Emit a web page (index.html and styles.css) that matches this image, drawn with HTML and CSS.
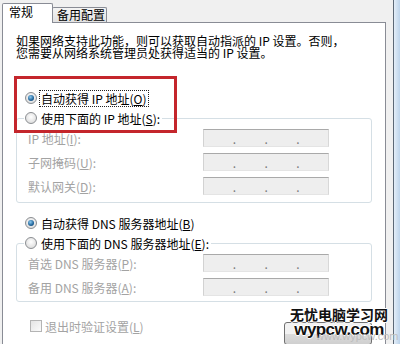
FILE: index.html
```html
<!DOCTYPE html>
<html lang="zh-CN">
<head>
    <meta charset="UTF-8">
    <title>Internet 协议版本 4 (TCP/IPv4) 属性</title>
    <link rel="stylesheet" href="styles.css">
</head>
<body>
    <div class="window">
        <div class="dialog">
            <div class="tabs">
                <div class="tab tab-active">常规</div>
                <div class="tab">备用配置</div>
            </div>
            <div class="panel">
                <p class="intro">如果网络支持此功能，则可以获取自动指派的 IP 设置。否则，<br>您需要从网络系统管理员处获得适当的 IP 设置。</p>

                <div class="option option-first">
                    <span class="radio checked"></span>
                    <span class="focus">自动获得 IP 地址(<u>O</u>)</span>
                </div>
                <fieldset class="group group-ip">
                    <legend class="legend"><span class="radio"></span>使用下面的 IP 地址(<u>S</u>):</legend>
                    <div class="fields">
                        <div class="field">
                            <span class="field-label">IP 地址(<u>I</u>):</span>
                            <span class="ip-box"><span></span><b>.</b><span></span><b>.</b><span></span><b>.</b><span></span></span>
                        </div>
                        <div class="field">
                            <span class="field-label">子网掩码(<u>U</u>):</span>
                            <span class="ip-box"><span></span><b>.</b><span></span><b>.</b><span></span><b>.</b><span></span></span>
                        </div>
                        <div class="field">
                            <span class="field-label">默认网关(<u>D</u>):</span>
                            <span class="ip-box"><span></span><b>.</b><span></span><b>.</b><span></span><b>.</b><span></span></span>
                        </div>
                    </div>
                </fieldset>

                <div class="option option-dns">
                    <span class="radio checked"></span>
                    <span>自动获得 DNS 服务器地址(<u>B</u>)</span>
                </div>
                <fieldset class="group group-dns">
                    <legend class="legend"><span class="radio"></span>使用下面的 DNS 服务器地址(<u>E</u>):</legend>
                    <div class="fields">
                        <div class="field">
                            <span class="field-label">首选 DNS 服务器(<u>P</u>):</span>
                            <span class="ip-box"><span></span><b>.</b><span></span><b>.</b><span></span><b>.</b><span></span></span>
                        </div>
                        <div class="field">
                            <span class="field-label">备用 DNS 服务器(<u>A</u>):</span>
                            <span class="ip-box"><span></span><b>.</b><span></span><b>.</b><span></span><b>.</b><span></span></span>
                        </div>
                    </div>
                </fieldset>

                <div class="check-row">
                    <div class="check"><span class="checkbox"></span>退出时验证设置(<u>L</u>)</div>
                    <div class="button"></div>
                </div>

                <!-- red annotation frame -->
                <div class="highlight"></div>
            </div>
        </div>
        <div class="frame-edge"></div>
    </div>

    <div class="watermark">
        <div class="wm-faint">www.wypcw.com</div>
        <div class="wm-cn">无忧电脑学习网</div>
        <div class="wm-en">wypcw.com</div>
    </div>
</body>
</html>
```

FILE: styles.css
```css
:root {
    --border: #898c95;
    --group: #d5dfe5;
    --disabled: #a3a3a3;
    --annotation: #c4262c;
}

body {
    margin: 0;
    width: 400px;
    height: 344px;
    overflow: hidden;
    position: relative;
    background-color: #f0f0f0;
    font-family: "Noto Sans CJK SC", sans-serif;
    font-size: 12px;
    color: #000;
}

u {
    text-decoration-thickness: 1px;
    text-underline-offset: 1px;
}

.window {
    display: flex;
    height: 344px;
}

.dialog {
    margin-left: 2px;
    width: 384px;
}

.frame-edge {
    margin-left: 7px;
    width: 6px;
    border-left: 1px solid #5c6876;
    background: linear-gradient(90deg, #e4eef8, #bcd3ea);
}

/* tabs */
.tabs {
    display: flex;
    align-items: flex-end;
    padding-top: 3px;
}

.tab {
    box-sizing: border-box;
    width: 55px;
    height: 15px;
    margin-left: -1px;
    padding-left: 4px;
    border: 1px solid var(--border);
    border-bottom: none;
    border-radius: 2px 2px 0 0;
    background: linear-gradient(#f4f4f4, #e2e2e2);
    line-height: 14px;
}

.tab-active {
    position: relative;
    z-index: 1;
    width: 51px;
    height: 20px;
    margin: 0 0 -1px 0;
    padding-left: 6px;
    background: #fff;
    line-height: 16px;
}

/* panel */
.panel {
    position: relative;
    box-sizing: border-box;
    border: 1px solid var(--border);
    background-color: #fff;
    padding: 12px 13px 24px;
}

.intro {
    margin: 0;
    line-height: 12px;
    white-space: nowrap;
}

.option {
    display: flex;
    align-items: center;
    height: 20px;
    padding-left: 9px;
}

.option-first {
    margin-top: 29px;
}

.option-dns {
    margin-top: 10px;
}

.focus {
    outline: 1px dotted #222;
    outline-offset: 1px;
    line-height: 13px;
}

.radio {
    flex: none;
    display: flex;
    align-items: center;
    justify-content: center;
    box-sizing: border-box;
    width: 12px;
    height: 12px;
    margin-right: 4px;
    border: 1px solid #8b8e92;
    border-radius: 50%;
    background: radial-gradient(circle at 50% 40%, #ffffff, #d4d4d4);
}

.radio.checked::after {
    content: "";
    width: 6px;
    height: 6px;
    border-radius: 50%;
    background: radial-gradient(circle at 40% 35%, #8ccaf0, #1f6399 60%, #0b3a62);
}

/* group boxes */
.group {
    margin: 0;
    min-width: 0;
    padding: 0 0 7px 7px;
    border: 1px solid var(--group);
    border-radius: 3px;
}

.group-dns {
    padding-bottom: 5px;
}

.legend {
    display: flex;
    align-items: center;
    height: 20px;
    margin: 0;
    padding: 0 2px 0 1px;
}

.fields {
    display: flex;
    flex-direction: column;
    gap: 6px;
    margin-top: 1px;
    padding-left: 4px;
}

.field {
    display: flex;
    align-items: center;
    height: 18px;
}

.field-label {
    width: 175px;
    color: var(--disabled);
}

.ip-box {
    display: flex;
    align-items: flex-end;
    box-sizing: border-box;
    width: 126px;
    height: 18px;
    border: 1px solid;
    border-color: #a9a9a9 #d8d8d8 #e4e4e4 #d2d2d2;
    background-color: #eeeeee;
    color: #7a7a7a;
    line-height: 14px;
}

.ip-box span {
    flex: 1;
}

.ip-box b {
    width: 3px;
    font-weight: normal;
}

/* bottom row */
.check-row {
    display: flex;
    align-items: flex-start;
    margin-top: 14px;
    padding-left: 14px;
}

.check {
    display: flex;
    align-items: center;
    height: 20px;
    color: var(--disabled);
}

.checkbox {
    box-sizing: border-box;
    width: 12px;
    height: 12px;
    margin-right: 3px;
    border: 1px solid #b4b4b4;
    background: linear-gradient(135deg, #e4e4e4, #fbfbfb);
}

.button {
    box-sizing: border-box;
    width: 88px;
    height: 23px;
    margin: 6px 0 0 auto;
    border: 1px solid #707070;
    border-radius: 3px;
    background: linear-gradient(#f2f2f2 50%, #dddddd 50%, #cfcfcf);
}

.highlight {
    position: absolute;
    left: 11px;
    top: 53px;
    box-sizing: border-box;
    width: 163px;
    height: 57px;
    border: 3px solid var(--annotation);
}

/* watermark over the screenshot */
.watermark {
    position: absolute;
    left: 288px;
    top: 307px;
    width: 102px;
    text-align: center;
    line-height: 1;
    color: #111;
    text-shadow: 1px 0 #fff, -1px 0 #fff, 0 1px #fff, 0 -1px #fff;
}

.wm-cn {
    font-size: 14px;
    font-weight: 700;
}

.wm-en {
    margin-top: 0;
    font-family: "Liberation Sans", sans-serif;
    font-size: 17px;
    font-weight: 700;
    letter-spacing: -0.6px;
}

.wm-faint {
    position: absolute;
    left: 28px;
    top: 24px;
    font-family: "Liberation Sans", sans-serif;
    font-size: 11px;
    color: #bdbdbd;
    text-shadow: none;
    white-space: nowrap;
}
```
